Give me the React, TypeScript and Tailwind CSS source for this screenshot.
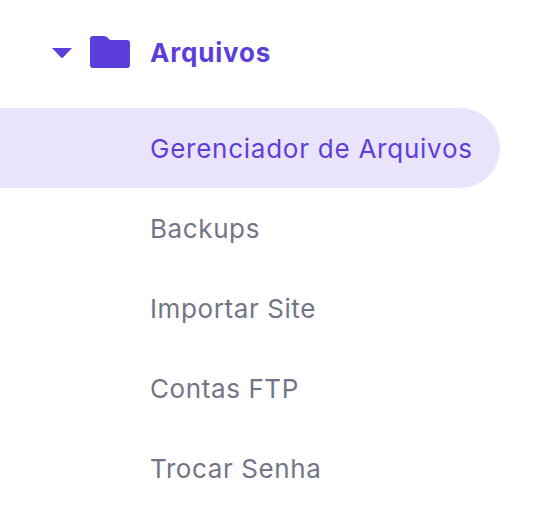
import React from 'react';

const items = ['Backups', 'Importar Site', 'Contas FTP', 'Trocar Senha'];

const App: React.FC = () => {
  return (
    <div className="w-[542px] h-[522px] bg-white overflow-hidden font-['Inter',sans-serif]">
      <div className="flex items-center h-[40px] mt-[32px] pl-[52px]">
        <svg width="20" height="10" viewBox="0 0 20 10" className="mr-[18px] mt-[1px]">
          <path d="M0 0 H20 L11 9.6 Q10 10.4 9 9.6 Z" fill="#5c3fdb" />
        </svg>
        <svg width="40" height="32" viewBox="0 0 40 32" className="mr-[20px]">
          <path d="M3 0 H14 Q16 0 17.5 1.5 L20 4 H37 A3 3 0 0 1 40 7 V29 A3 3 0 0 1 37 32 H3 A3 3 0 0 1 0 29 V3 A3 3 0 0 1 3 0 Z" fill="#5c3fdb" />
        </svg>
        <span className="text-[26px] font-bold tracking-[0.8px] text-[#5c3fdb] mt-[1px]">Arquivos</span>
      </div>
      <div className="mt-[36px] w-[500px] h-[80px] bg-[#e9e4fb] rounded-r-[40px] flex items-center pl-[150px]">
        <span className="text-[26px] tracking-[0.75px] text-[#5c3fdb] mt-[1px]">Gerenciador de Arquivos</span>
      </div>
      {items.map(item => (
        <div key={item} className="h-[80px] flex items-center pl-[150px]">
          <span className="text-[26px] tracking-[0.6px] text-[#727586] mt-[1px]">{item}</span>
        </div>
      ))}
    </div>
  );
};

export default App;
